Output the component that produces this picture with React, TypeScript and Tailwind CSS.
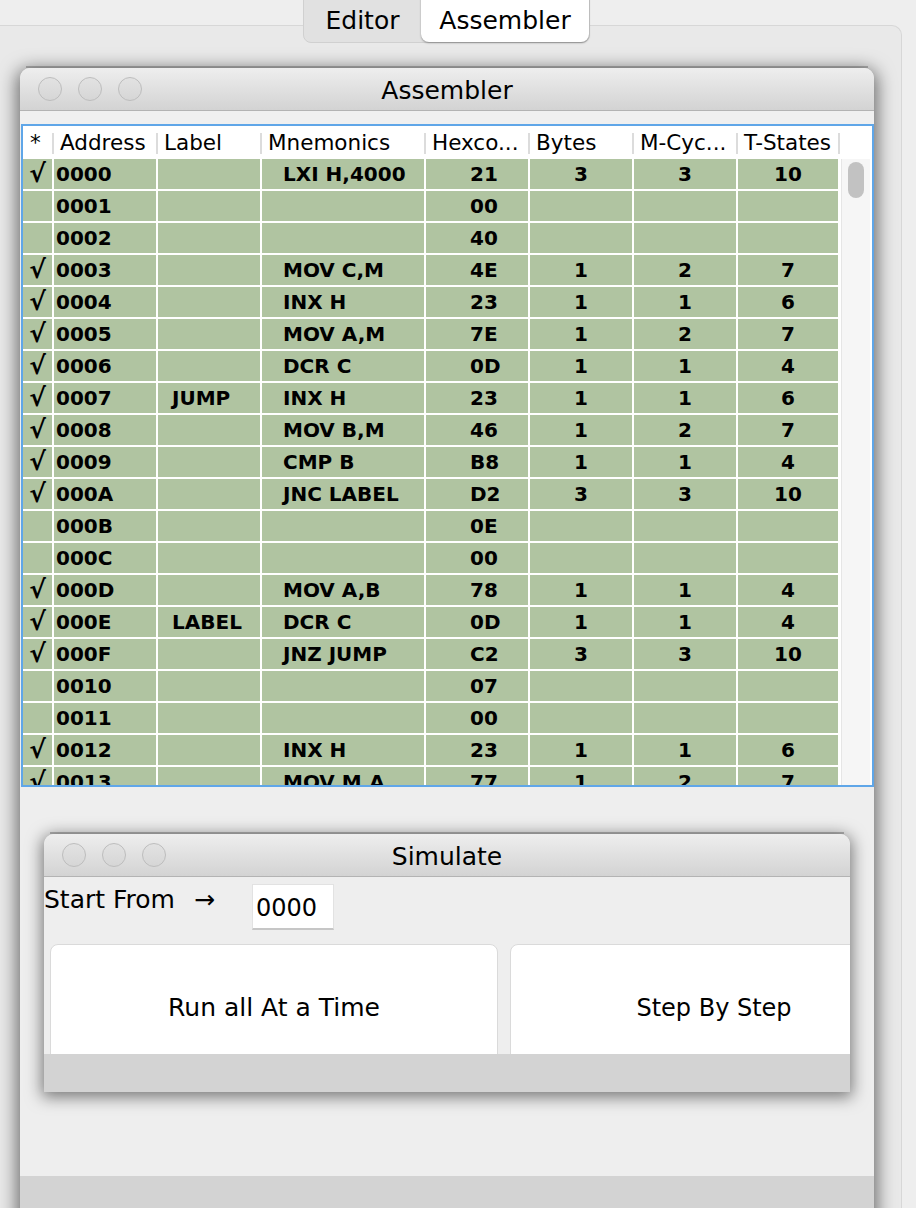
import React from "react";

const rows: string[][] = [
  ["√", "0000", "", "LXI H,4000", "21", "3", "3", "10"],
  ["", "0001", "", "", "00", "", "", ""],
  ["", "0002", "", "", "40", "", "", ""],
  ["√", "0003", "", "MOV C,M", "4E", "1", "2", "7"],
  ["√", "0004", "", "INX H", "23", "1", "1", "6"],
  ["√", "0005", "", "MOV A,M", "7E", "1", "2", "7"],
  ["√", "0006", "", "DCR C", "0D", "1", "1", "4"],
  ["√", "0007", "JUMP", "INX H", "23", "1", "1", "6"],
  ["√", "0008", "", "MOV B,M", "46", "1", "2", "7"],
  ["√", "0009", "", "CMP B", "B8", "1", "1", "4"],
  ["√", "000A", "", "JNC LABEL", "D2", "3", "3", "10"],
  ["", "000B", "", "", "0E", "", "", ""],
  ["", "000C", "", "", "00", "", "", ""],
  ["√", "000D", "", "MOV A,B", "78", "1", "1", "4"],
  ["√", "000E", "LABEL", "DCR C", "0D", "1", "1", "4"],
  ["√", "000F", "", "JNZ JUMP", "C2", "3", "3", "10"],
  ["", "0010", "", "", "07", "", "", ""],
  ["", "0011", "", "", "00", "", "", ""],
  ["√", "0012", "", "INX H", "23", "1", "1", "6"],
  ["√", "0013", "", "MOV M,A", "77", "1", "2", "7"],
];

const headers = ["*", "Address", "Label", "Mnemonics", "Hexco...", "Bytes", "M-Cyc...", "T-States"];

const cellAlign = [
  "justify-center text-[25px] font-black",
  "justify-start pl-[2px] text-[20px]",
  "justify-start pl-[14px] text-[20px]",
  "justify-start pl-[21px] text-[20px]",
  "justify-start pl-[44px] text-[20px]",
  "justify-center text-[20px]",
  "justify-center text-[20px]",
  "justify-center text-[20px]",
];

function Lights() {
  return (
    <div className="flex items-center gap-[16px]">
      {[0, 1, 2].map((i) => (
        <div
          key={i}
          className="w-[24px] h-[24px] rounded-full border border-[#bdbdbd] bg-gradient-to-b from-[#e2e2e2] to-[#d6d6d6]"
        />
      ))}
    </div>
  );
}

function TitleBar({ title }: { title: string }) {
  return (
    <div className="relative shrink-0 h-[43px] rounded-t-[10px] border-b border-[#b3b3b3] bg-gradient-to-b from-[#eeeeee] to-[#d3d3d3] flex items-center">
      <div className="pl-[18px]">
        <Lights />
      </div>
      <div className="absolute inset-0 flex items-center justify-center pt-[4px] text-[25px] text-black">
        {title}
      </div>
    </div>
  );
}

export default function App() {
  return (
    <div className="relative w-[916px] h-[1208px] overflow-hidden bg-[#eeeeee] font-['DejaVu_Sans',sans-serif] text-black">
      {/* Tab pane */}
      <div className="mt-[25px] w-[902px] h-[1200px] bg-[#e9e9e9] border-t border-r border-[#d7d7d7] rounded-tr-[10px] pl-[20px] pt-[40px]">
        {/* Assembler internal frame */}
        <div className="h-[2px] w-[842px] ml-[6px] bg-[#b4b4b4]" />
        <div className="w-[854px] rounded-t-[10px] bg-[#eeeeee] shadow-[0_4px_18px_3px_rgba(0,0,0,0.55)] flex flex-col">
          <TitleBar title="Assembler" />
          <div className="h-[13px] shrink-0 bg-[#f0f0f0]" />
          {/* Table */}
          <div className="shrink-0 ml-[1px] w-[853px] h-[663px] border-2 border-[#5fa6e8] bg-white overflow-hidden flex flex-col">
            {/* header */}
            <div className="flex h-[33px] shrink-0">
              <div className="grid grid-cols-[31px_104px_104px_164px_104px_104px_104px_102px] h-[31px]">
                {headers.map((h, i) => (
                  <div key={i} className="flex items-center h-[31px]">
                    <div className={`flex-1 pt-[3px] text-[21.5px] leading-[28px] whitespace-nowrap overflow-hidden ${i === 0 ? "pl-[7px]" : "pl-[6px]"}`}>
                      {h}
                    </div>
                    <div className="w-[2px] h-[21px] mt-[3px] bg-[#dcdcdc]" />
                  </div>
                ))}
              </div>
            </div>
            {/* body */}
            <div className="flex flex-1 min-h-0">
              <div className="flex flex-col gap-y-[2px] w-[815px] shrink-0">
                {rows.map((r, ri) => (
                  <div
                    key={ri}
                    className="grid grid-cols-[29px_102px_102px_162px_102px_102px_102px_100px] grid-rows-[30px] gap-x-[2px] h-[30px] shrink-0 overflow-hidden"
                  >
                    {r.map((c, ci) => (
                      <div
                        key={ci}
                        className={`flex items-center h-[30px] leading-[30px] overflow-hidden bg-[#b0c4a1] font-bold whitespace-nowrap ${cellAlign[ci]}`}
                      >
                        {c}
                      </div>
                    ))}
                  </div>
                ))}
              </div>
              <div className="flex-1 pl-[3px]">
                <div className="w-[29px] h-full bg-[#f6f6f6] border-l border-[#e6e6e6] pt-[3px] flex justify-center">
                  <div className="w-[16px] h-[36px] rounded-full bg-[#c2c2c2]" />
                </div>
              </div>
            </div>
          </div>

          {/* Simulate internal frame */}
          <div className="shrink-0 mt-[45px] ml-[24px] w-[806px]">
            <div className="h-[2px] mx-[6px] bg-[#b4b4b4]" />
            <div className="rounded-t-[10px] bg-[#eeeeee] shadow-[0_3px_16px_2px_rgba(0,0,0,0.5)] flex flex-col">
              <TitleBar title="Simulate" />
              <div className="overflow-hidden shrink-0">
                <div className="flex items-start h-[67px] pt-[7px]">
                  <div className="pt-[2px] text-[25px] leading-[28px] whitespace-nowrap">
                    Start From<span className="ml-[19px]">→</span>
                  </div>
                  <div className="ml-[37px] w-[82px] h-[46px] bg-white border border-[#e2e2e2] border-b-2 border-b-[#c6c6c6] flex items-center pl-[3px] pt-[3px] text-[24px]">
                    0000
                  </div>
                </div>
                <div className="flex gap-[12px] pl-[6px] h-[110px] overflow-hidden">
                  <div className="w-[448px] h-[120px] shrink-0 bg-white border border-[#dadada] rounded-[8px] flex justify-center pt-[44px] text-[25px]">
                    Run all At a Time
                  </div>
                  <div className="w-[408px] h-[120px] shrink-0 bg-white border border-[#dadada] rounded-[8px] flex justify-center pt-[45px] text-[24px]">
                    Step By Step
                  </div>
                </div>
                <div className="h-[38px] bg-[#d3d3d3]" />
              </div>
            </div>
          </div>

          <div className="shrink-0 mt-[84px] h-[60px] bg-[#d3d3d3]" />
        </div>
      </div>

      {/* Segmented tab control */}
      <div className="absolute left-[303px] top-[-10px] w-[287px] h-[53px] rounded-[8px] bg-[#e1e1e1] border border-[#d0d0d0] flex">
        <div className="w-[117px] flex items-end justify-center pb-[3px] text-[25px]">Editor</div>
        <div className="flex-1 bg-white rounded-[8px] shadow-[0_1px_2px_rgba(0,0,0,0.35)] flex items-end justify-center pb-[3px] text-[25px]">
          Assembler
        </div>
      </div>
    </div>
  );
}
